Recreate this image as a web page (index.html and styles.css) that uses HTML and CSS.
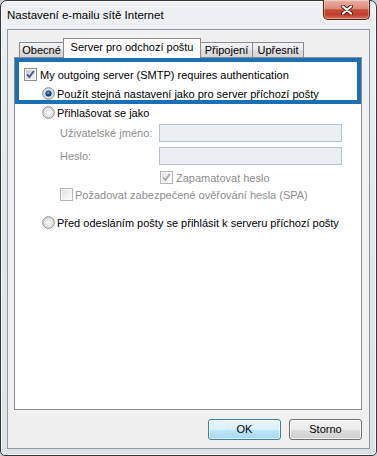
FILE: index.html
```html
<!DOCTYPE html>
<html lang="cs">
<head>
    <meta charset="utf-8">
    <title>Nastavení e-mailu sítě Internet</title>
    <link rel="stylesheet" href="styles.css">
</head>
<body>
    <!-- shared gradients for the little controls -->
    <svg class="defs" width="0" height="0">
        <defs>
            <linearGradient id="boxFill" x1="0" y1="0" x2="1" y2="1">
                <stop offset="0" stop-color="#c3c8ce"/>
                <stop offset="1" stop-color="#f5f5f6"/>
            </linearGradient>
            <linearGradient id="boxFillOff" x1="0" y1="0" x2="1" y2="1">
                <stop offset="0" stop-color="#e2e4e6"/>
                <stop offset="1" stop-color="#fbfbfb"/>
            </linearGradient>
            <radialGradient id="radioFill" cx="0.5" cy="0.5" r="0.6">
                <stop offset="0" stop-color="#fbfbfb"/>
                <stop offset="1" stop-color="#cfd2d6"/>
            </radialGradient>
            <radialGradient id="radioDot" cx="0.45" cy="0.4" r="0.6">
                <stop offset="0" stop-color="#7fbde9"/>
                <stop offset="0.45" stop-color="#1f5d97"/>
                <stop offset="1" stop-color="#0b2748"/>
            </radialGradient>
        </defs>
    </svg>

    <div class="window">
        <div class="titlebar">
            <span class="title">Nastavení e-mailu sítě Internet</span>
            <div class="close">
                <svg width="12" height="10" viewBox="0 0 12 10">
                    <path d="M2 1.5 L10 8.5 M10 1.5 L2 8.5" stroke="#4a1a14" stroke-width="4" stroke-linecap="round"/>
                    <path d="M2 1.5 L10 8.5 M10 1.5 L2 8.5" stroke="#fff" stroke-width="2.2" stroke-linecap="round"/>
                </svg>
            </div>
        </div>

        <div class="client">
            <div class="tabs">
                <div class="tab t-general">Obecné</div>
                <div class="tab active t-smtp">Server pro odchozí poštu</div>
                <div class="tab t-conn">Připojení</div>
                <div class="tab t-adv">Upřesnit</div>
            </div>

            <div class="panel">
                <div class="highlight"></div>

                <div class="row first">
                    <svg class="cb" width="13" height="13" viewBox="0 0 13 13">
                        <rect x="0.5" y="0.5" width="12" height="12" fill="#f6f6f6" stroke="#8e8f8f"/>
                        <rect x="2" y="2" width="9" height="9" fill="url(#boxFill)"/>
                        <path d="M3.2 6.4 L5.4 9 L9.8 3" fill="none" stroke="#3c5b9c" stroke-width="1.9"/>
                    </svg>
                    <span>My outgoing server (SMTP) requires authentication</span>
                </div>

                <div class="row opt">
                    <svg class="rb" width="13" height="13" viewBox="0 0 13 13">
                        <circle cx="6.5" cy="6.5" r="5.8" fill="url(#radioFill)" stroke="#8a8c8f"/>
                        <circle cx="6.5" cy="6.5" r="4" fill="#bcdcf4"/>
                        <circle cx="6.5" cy="6.5" r="3" fill="url(#radioDot)"/>
                    </svg>
                    <span>Použít stejná nastavení jako pro server příchozí pošty</span>
                </div>

                <div class="row opt">
                    <svg class="rb" width="13" height="13" viewBox="0 0 13 13">
                        <circle cx="6.5" cy="6.5" r="5.8" fill="url(#radioFill)" stroke="#8a8c8f"/>
                    </svg>
                    <span>Přihlašovat se jako</span>
                </div>

                <div class="field user">
                    <span class="lbl dis">Uživatelské jméno:</span>
                    <div class="input"></div>
                </div>
                <div class="field pass">
                    <span class="lbl dis">Heslo:</span>
                    <div class="input"></div>
                </div>

                <div class="row small remember">
                    <svg class="cb" width="13" height="13" viewBox="0 0 13 13">
                        <rect x="0.5" y="0.5" width="12" height="12" fill="#fafafa" stroke="#b4b4b4"/>
                        <rect x="2" y="2" width="9" height="9" fill="url(#boxFillOff)"/>
                        <path d="M3.2 6.4 L5.4 9 L9.8 3" fill="none" stroke="#a9a9a9" stroke-width="1.8"/>
                    </svg>
                    <span class="dis">Zapamatovat heslo</span>
                </div>

                <div class="row small spa">
                    <svg class="cb" width="13" height="13" viewBox="0 0 13 13">
                        <rect x="0.5" y="0.5" width="12" height="12" fill="#fafafa" stroke="#b4b4b4"/>
                        <rect x="2" y="2" width="9" height="9" fill="url(#boxFillOff)"/>
                    </svg>
                    <span class="dis">Požadovat zabezpečené ověřování hesla (SPA)</span>
                </div>

                <div class="row opt last">
                    <svg class="rb" width="13" height="13" viewBox="0 0 13 13">
                        <circle cx="6.5" cy="6.5" r="5.8" fill="url(#radioFill)" stroke="#8a8c8f"/>
                    </svg>
                    <span>Před odesláním pošty se přihlásit k serveru příchozí pošty</span>
                </div>
            </div>

            <div class="buttons">
                <div class="btn default">OK</div>
                <div class="btn">Storno</div>
            </div>
        </div>
    </div>
</body>
</html>
```

FILE: styles.css
```css
html {
    background: #c9ced3;
}

body {
    margin: 0;
    font-family: "Liberation Sans", Arial, sans-serif;
    font-size: 11px;
    color: #000;
}

.defs {
    position: absolute;
}

.window {
    width: 377px;
    height: 456px;
    box-sizing: border-box;
    border: 1px solid #33383d;
    border-radius: 7px 7px 5px 5px;
    background: linear-gradient(#eef1f4, #e3e8ec 45%, #dde2e7);
    box-shadow: inset 0 0 0 1px rgba(255, 255, 255, 0.8);
    display: flex;
    flex-direction: column;
}

.titlebar {
    height: 28px;
    display: flex;
    padding-left: 6px;
}

.title {
    line-height: 28px;
    font-size: 11.5px;
}

.close {
    margin: -1px 6px 0 auto;
    width: 47px;
    height: 20px;
    box-sizing: border-box;
    border: 1px solid #50211a;
    border-top: none;
    border-radius: 0 0 5px 5px;
    background: linear-gradient(#eab0a3 0%, #dc8b7b 45%, #c64a37 52%, #c23e2c 78%, #d9745c 100%);
    box-shadow: inset 0 0 0 1px rgba(255, 255, 255, 0.35);
    display: flex;
    align-items: center;
    justify-content: center;
}

.client {
    margin: 0 6px;
    height: 420px;
    box-sizing: border-box;
    border: 1px solid #8d98a4;
    background: #f0f0f0;
}

/* tab strip */
.tabs {
    display: flex;
    align-items: flex-end;
    padding: 8px 0 0 11px;
    height: 19px;
}

.tab {
    height: 15px;
    box-sizing: border-box;
    border: 1px solid #898c95;
    border-bottom: none;
    background: linear-gradient(#f4f4f4, #e9e9e9 50%, #dcdcdc 51%, #d6d6d6);
    text-align: center;
    line-height: 15px;
    margin-left: -1px;
}

.tab.active {
    height: 20px;
    margin-bottom: -1px;
    background: #fff;
    line-height: 16px;
    position: relative;
    z-index: 1;
}

.t-general {
    width: 45px;
    margin-left: 0;
}

.t-smtp {
    width: 138px;
}

.t-conn {
    width: 53px;
}

.t-adv {
    width: 52px;
}

.panel {
    position: relative;
    margin: 0 7px 0 6px;
    height: 353px;
    box-sizing: border-box;
    border: 1px solid #898c95;
    background: #fff;
    padding-top: 7px;
}

/* blue annotation frame laid over the first two options */
.highlight {
    position: absolute;
    top: 0;
    left: 0;
    right: 0;
    height: 46px;
    box-sizing: border-box;
    border: 4px solid #1c6fb3;
}

.row {
    display: flex;
    align-items: center;
    height: 19px;
}

.row svg {
    flex: none;
    margin-right: 3px;
}

.row.first {
    padding-left: 9px;
}

.row.opt {
    padding-left: 27px;
}

.row.opt svg {
    margin-right: 2px;
}

.row.small {
    height: 17px;
}

.row.remember {
    margin-top: 4px;
    padding-left: 145px;
}

.row.spa {
    padding-left: 45px;
}

.row.spa svg {
    margin-right: 2px;
}

.row.last {
    margin-top: 10px;
}

.dis {
    color: #8e8e8e;
}

.field {
    display: flex;
    align-items: center;
    padding-left: 45px;
    height: 18px;
}

.field.user {
    margin-top: 2px;
}

.field.pass {
    margin-top: 5px;
}

.lbl {
    width: 99px;
}

.input {
    width: 183px;
    height: 18px;
    box-sizing: border-box;
    border: 1px solid #b6c2cf;
    background: #ebeff4;
}

.buttons {
    display: flex;
    justify-content: flex-end;
    gap: 8px;
    padding: 9px 7px 0 0;
}

.btn {
    width: 73px;
    height: 21px;
    box-sizing: border-box;
    border: 1px solid #707070;
    border-radius: 3px;
    background: linear-gradient(#f2f2f2, #ebebeb 50%, #dddddd 51%, #cfcfcf);
    box-shadow: inset 0 0 0 1px rgba(255, 255, 255, 0.7);
    text-align: center;
    line-height: 19px;
}

.btn.default {
    border-color: #3c7fb1;
    background: linear-gradient(#eaf6fd, #d9f0fc 50%, #bee6fd 51%, #a7d9f5);
}
```
